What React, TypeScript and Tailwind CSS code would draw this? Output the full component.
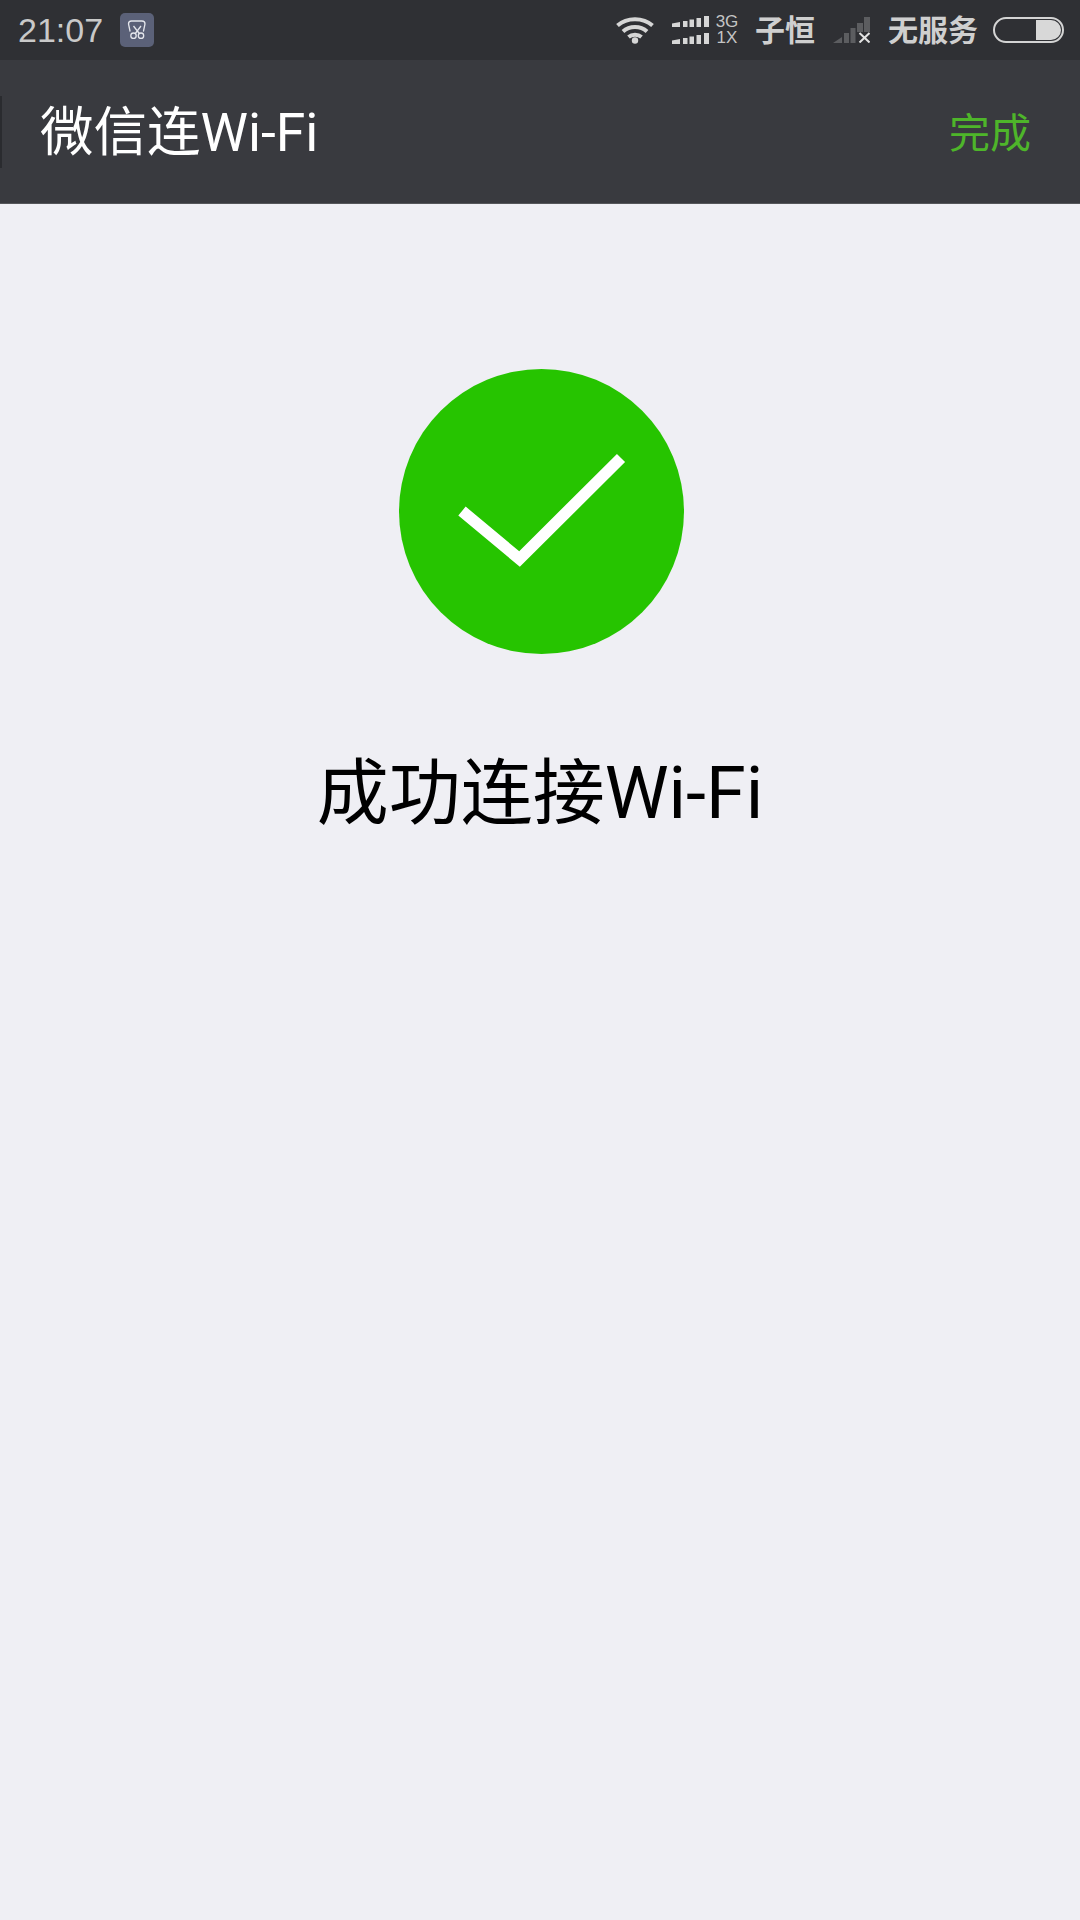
const uiFont = "font-['Roboto','Noto_Sans_CJK_SC',sans-serif]";

function ScissorsBadge() {
  return (
    <div className="ml-[17px] flex h-[34px] w-[34px] items-center justify-center rounded-[5px] bg-[#5b6178]">
      <svg width={34} height={34} viewBox="0 0 34 34" fill="none" stroke="#e4e6ec" strokeWidth={1.3}>
        <path d="M10 18 L8.5 11 Q8.5 8 11.5 8 H22 Q25 8 25 11 L23.5 18" strokeLinecap="round" />
        <circle cx={13.5} cy={22.7} r={2.7} />
        <circle cx={21} cy={22.7} r={2.7} />
        <path d="M15.3 20.5 L21 13 M19.3 20.5 L13.5 13" />
      </svg>
    </div>
  );
}

function WifiIcon() {
  return (
    <svg width={38} height={28} viewBox="0 0 38 28" fill="none" stroke="#d6d6d6" strokeWidth={4}>
      <path d="M1.5 9.5 C11 1 27 1 36.5 9.5" />
      <path d="M7 15.5 C13.5 9.5 24.5 9.5 31 15.5" />
      <path d="M12.5 21 C16 18 22 18 25.5 21" />
      <circle cx={19} cy={24.5} r={3.2} fill="#d6d6d6" stroke="none" />
    </svg>
  );
}

function SignalRow({ y }: { y: number }) {
  return (
    <g fill="#d6d6d6" transform={`translate(0 ${y})`}>
      <path d="M0 7.5 L8 6 V11 H0 Z" />
      <rect x={11} y={5} width={4.5} height={6} />
      <rect x={17.5} y={3.5} width={4.5} height={7.5} />
      <rect x={24.5} y={2} width={4.5} height={9} />
      <rect x={32} y={0} width={5} height={11} />
    </g>
  );
}

function DualSignal() {
  return (
    <div className="ml-[18px] flex items-center gap-[8px]">
      <svg width={37} height={28} viewBox="0 0 37 28">
        <SignalRow y={0} />
        <SignalRow y={17} />
      </svg>
      <div className="flex w-[20px] flex-col items-center font-['Liberation_Sans',sans-serif] text-[17px] leading-[16px] font-light text-[#c4c4c4]">
        <span>3G</span>
        <span>1X</span>
      </div>
    </div>
  );
}

function NoSignal() {
  return (
    <svg className="ml-[18px]" width={37} height={26} viewBox="0 0 37 26">
      <g fill="#5c5d60">
        <path d="M0 26 L9 20 V26 Z" />
        <rect x={11} y={16} width={5} height={10} />
        <rect x={17.5} y={11} width={5} height={15} />
        <rect x={24} y={6} width={6} height={9} />
        <rect x={31} y={0} width={6} height={15} />
      </g>
      <path d="M26.5 16 L36.5 25.5 M36.5 16 L26.5 25.5" stroke="#e2e2e2" strokeWidth={2} />
    </svg>
  );
}

function Battery() {
  return (
    <div className="ml-[15px] flex h-[26px] w-[71px] justify-end rounded-full border-[2.5px] border-[#d4d4d4] p-[1px]">
      <div className="h-full w-[25px] rounded-r-full bg-[#d8d8d8]" />
    </div>
  );
}

function StatusBar() {
  return (
    <div className="flex h-[60px] items-center justify-between bg-[#2f3034] pr-[16px] pl-[18px]">
      <div className="flex items-center">
        <span className="font-['Liberation_Sans',sans-serif] text-[34px] text-[#c9c9c9]">21:07</span>
        <ScissorsBadge />
      </div>
      <div className="flex items-center text-[30px] font-bold text-[#cfcfcf]">
        <WifiIcon />
        <DualSignal />
        <span className="ml-[18px]">子恒</span>
        <NoSignal />
        <span className="ml-[18px]">无服务</span>
        <Battery />
      </div>
    </div>
  );
}

function NavBar() {
  return (
    <div className="flex h-[144px] items-center justify-between border-b border-[#55565a] bg-[#393a3f] pr-[49px]">
      <div className="flex h-[72px] items-center">
        <div className="h-full w-[2px] bg-[#2a2b2f]" />
        <h1 className="mt-[4px] ml-[38px] text-[53.5px] font-normal text-white">微信连Wi-Fi</h1>
      </div>
      <button className="mt-[6px] text-[41px] text-[#4eb52a]">完成</button>
    </div>
  );
}

export default function App() {
  return (
    <div className={`flex h-[1920px] flex-col bg-[#efeff4] ${uiFont}`}>
      <StatusBar />
      <NavBar />
      <main className="flex flex-col items-center pt-[165px]">
        <div className="ml-[3px] flex h-[285px] w-[285px] items-center justify-center rounded-full bg-[#26c400]">
          <svg width={285} height={285} viewBox="0 0 285 285" fill="none">
            <path d="M63 142 L120.5 190 L222 89" stroke="#ffffff" strokeWidth={11.5} />
          </svg>
        </div>
        <p className="mt-[86px] text-[72px] leading-[108px] text-black">成功连接Wi-Fi</p>
      </main>
    </div>
  );
}
